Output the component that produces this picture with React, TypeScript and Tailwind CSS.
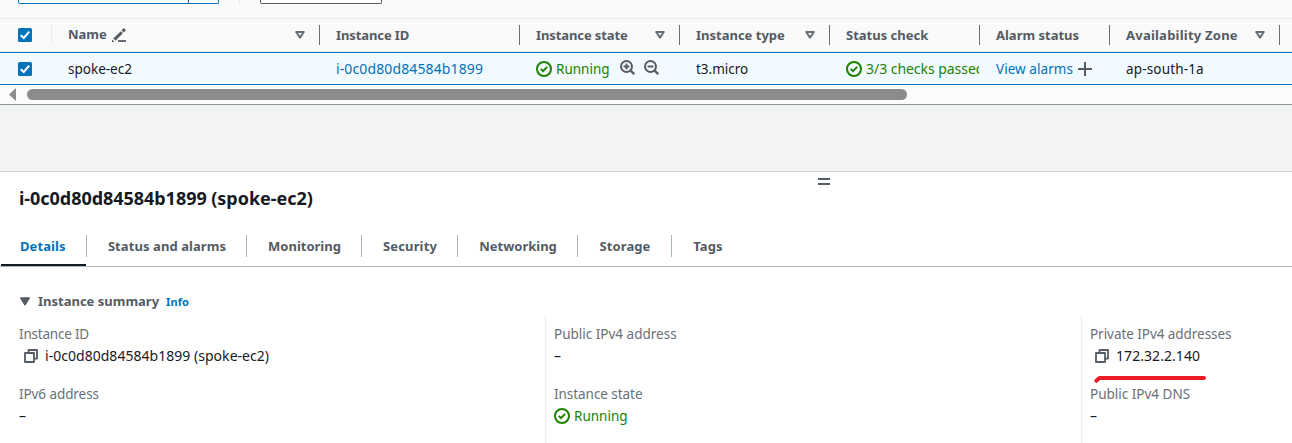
import type { ReactNode } from "react";

function Checkbox() {
  return (
    <svg className="block h-[14px] w-[14px]" viewBox="0 0 14 14">
      <rect width="14" height="14" rx="1.5" fill="#0073bb" />
      <path d="M2.7 7.2 5.8 10 11.2 3.6" fill="none" stroke="#fff" strokeWidth="2" />
    </svg>
  );
}

function SortIcon() {
  return (
    <svg className="block h-[10px] w-[10px] shrink-0" viewBox="0 0 10 10">
      <path d="M1.2 2h7.6L5 7.6Z" fill="none" stroke="#687078" strokeWidth="2" strokeLinejoin="round" />
    </svg>
  );
}

function EditIcon() {
  return (
    <svg className="block h-[14px] w-[14px] shrink-0" viewBox="0 0 14 14" fill="none" stroke="#545b64">
      <path d="M2.4 11.6 9.8 4.2" strokeWidth="2.9" />
      <path d="M10.6 3.4 12.9 1.1" strokeWidth="2.9" />
      <path d="M0 14v-2.6L2.6 14Z" fill="#545b64" stroke="none" />
      <path d="M6 13h8" strokeWidth="1.8" />
    </svg>
  );
}

function CheckCircle() {
  return (
    <svg className="block h-4 w-4 shrink-0" viewBox="0 0 16 16" fill="none" stroke="#1d8102">
      <circle cx="8" cy="8" r="7" strokeWidth="2" />
      <path d="m4.7 7.9 2.3 2.2 4.2-4.2" strokeWidth="2" />
    </svg>
  );
}

function ZoomIcon({ plus }: { plus?: boolean }) {
  return (
    <svg className="block h-[15px] w-[15px] shrink-0" viewBox="0 0 15 15" fill="none" stroke="#545b64">
      <circle cx="6.5" cy="6.5" r="5.5" strokeWidth="2" />
      <path d="M10.2 10.2l4 4" strokeWidth="2.3" />
      <path d="M3.6 6.5h5.8" strokeWidth="2" />
      {plus && <path d="M6.5 3.6v5.8" strokeWidth="2" />}
    </svg>
  );
}

function PlusIcon() {
  return (
    <svg className="block h-[14px] w-[14px] shrink-0" viewBox="0 0 14 14">
      <path d="M7 0v14M0 7h14" stroke="#545b64" strokeWidth="2" />
    </svg>
  );
}

function CopyIcon() {
  return (
    <svg className="block h-[14px] w-[14px] shrink-0" viewBox="0 0 14 14" fill="none" stroke="#545b64" strokeWidth="1.8" strokeLinejoin="round">
      <path d="M1 4h9v9H1Z" />
      <path d="M4.6 4V1H13v8.6h-3" />
    </svg>
  );
}

function HeaderCell({ width, sort, children }: { width: string; sort?: boolean; children?: ReactNode }) {
  return (
    <div className={`flex h-full shrink-0 items-center ${width}`}>
      <div className="flex h-full min-w-0 flex-1 items-center justify-between pr-[14px] pl-4">
        <div className="flex items-center whitespace-nowrap">{children}</div>
        {sort && <SortIcon />}
      </div>
      <div className="h-5 w-px bg-[#687078]" />
    </div>
  );
}

function Tab({ label, className }: { label: string; className: string }) {
  return (
    <div className={`flex h-full shrink-0 items-center justify-center border-l border-[#aab7b8] pl-px whitespace-nowrap ${className}`}>
      {label}
    </div>
  );
}

function Field({ label, labelClass = "", children }: { label: string; labelClass?: string; children: ReactNode }) {
  return (
    <div className="h-[60px]">
      <div className={`h-[22px] text-[13.5px] leading-[22px] whitespace-nowrap text-[#687078] ${labelClass}`}>{label}</div>
      <div className="flex h-[22px] items-center text-[14px] leading-[22px] whitespace-nowrap text-[#16191f]">{children}</div>
    </div>
  );
}

export default function App() {
  return (
    <div className="flex h-[443px] w-[1292px] flex-col overflow-hidden bg-white font-['Noto_Sans',sans-serif] text-[#16191f]">
      <div className="flex h-[18px] shrink-0 items-start bg-[#fafafa] pl-[18px]">
        <div className="flex h-1 w-[201px] rounded-b-[2px] border-x border-b border-[#0073bb] bg-white">
          <div className="w-[170px] border-r border-[#0073bb]" />
        </div>
        <div className="ml-5 h-1 w-px bg-[#eaeded]" />
        <div className="ml-5 h-1 w-[122px] rounded-b-[2px] border-x border-b border-[#545b64] bg-white" />
      </div>

      <div className="flex h-[34px] shrink-0 items-center border-y border-[#eaeded] bg-[#fafafa] text-[13px] font-bold text-[#545b64]">
        <div className="flex w-[52px] shrink-0 items-center justify-between pl-[18px]">
          <Checkbox />
          <div className="h-5 w-px bg-[#eaeded]" />
        </div>
        <HeaderCell width="w-[268px]" sort>
          <span className="mr-[5px]">Name</span>
          <EditIcon />
        </HeaderCell>
        <HeaderCell width="w-[200px]"><span className="pt-0.5 tracking-[-0.1px]">Instance ID</span></HeaderCell>
        <HeaderCell width="w-[160px]" sort><span className="pt-0.5 tracking-[-0.1px]">Instance state</span></HeaderCell>
        <HeaderCell width="w-[150px]" sort><span className="pt-0.5">Instance type</span></HeaderCell>
        <HeaderCell width="w-[150px]"><span className="pt-0.5">Status check</span></HeaderCell>
        <HeaderCell width="w-[130px]"><span className="pt-0.5">Alarm status</span></HeaderCell>
        <HeaderCell width="w-[170px]" sort><span className="pt-0.5 tracking-[0.23px]">Availability Zone</span></HeaderCell>
      </div>

      <div className="flex h-[33px] shrink-0 items-center border-y border-[#0073bb] bg-[#f1faff] text-[13.5px] whitespace-nowrap">
        <div className="w-[52px] shrink-0 pl-[18px]"><Checkbox /></div>
        <div className="w-[268px] shrink-0 pt-0.5 pl-4">spoke-ec2</div>
        <div className="w-[200px] shrink-0 pl-4 text-[14px] tracking-[0.12px] text-[#0073bb]">i-0c0d80d84584b1899</div>
        <div className="flex w-[160px] shrink-0 items-center pl-4">
          <CheckCircle />
          <span className="ml-1 w-[64px] pt-0.5 text-[#1d8102]">Running</span>
          <div className="-mt-[2px] flex gap-[9px]"><ZoomIcon plus /><ZoomIcon /></div>
        </div>
        <div className="w-[150px] shrink-0 pt-0.5 pl-4">t3.micro</div>
        <div className="flex w-[149px] shrink-0 items-center overflow-hidden pl-4">
          <CheckCircle />
          <span className="ml-1 text-[14px] tracking-[-0.04px] text-[#1d8102]">3/3 checks passed</span>
        </div>
        <div className="flex w-[131px] shrink-0 items-center pl-[17px]">
          <span className="w-[82px] pt-0.5 tracking-[0.06px] text-[#0073bb]">View alarms</span>
          <PlusIcon />
        </div>
        <div className="w-[170px] shrink-0 pt-0.5 pl-4 tracking-[0.16px]">ap-south-1a</div>
      </div>

      <div className="flex h-[20px] shrink-0 items-center border-b border-[#879596] bg-[#fcfcfc] pl-[9px]">
        <svg className="block h-[13px] w-[7px]" viewBox="0 0 7 13"><path d="M7 0v13L0 6.5Z" fill="#8b8b8b" /></svg>
        <div className="ml-[11px] h-[11px] w-[880px] rounded-full bg-[#8b8b8b]" />
      </div>
      <div className="h-[67px] shrink-0 border-b border-[#ccd1d1] bg-[#f2f3f3]" />

      <div className="flex h-[12px] shrink-0 justify-center pt-[6px] pl-[356px]">
        <div className="h-[7px] w-3 border-y-2 border-[#545b64]" />
      </div>
      <h1 className="h-[30px] shrink-0 pl-[19px] text-[18px] leading-[28px] font-bold tracking-[-0.04px] whitespace-nowrap">
        i-0c0d80d84584b1899 (spoke-ec2)
      </h1>

      <div className="flex h-[53px] shrink-0 items-end border-b border-[#aab7b8] text-[13px] font-bold text-[#545b64]">
        <div className="ml-px flex h-[32px] w-[85px] shrink-0 flex-col border-b-2 border-[#16191f] pl-[19px] text-[#0073bb]">
          <span className="-mt-px leading-[26px] tracking-[0.08px]">Details</span>
        </div>
        <div className="mb-[9px] flex h-[22px] leading-[22px]">
          <Tab label="Status and alarms" className="w-[160px] tracking-[0.08px]" />
          <Tab label="Monitoring" className="w-[115px]" />
          <Tab label="Security" className="w-[96px] tracking-[0.15px]" />
          <Tab label="Networking" className="w-[120px]" />
          <Tab label="Storage" className="w-[94px] tracking-[0.08px]" />
          <Tab label="Tags" className="w-[72px] tracking-[0.15px]" />
        </div>
      </div>

      <div className="flex h-[48px] shrink-0 items-end pl-5 text-[#545b64]">
        <svg className="mb-[9px] block h-[9px] w-[10px]" viewBox="0 0 10 9"><path d="M.7 1h8.6L5 8Z" fill="#545b64" stroke="#545b64" strokeWidth="1.4" strokeLinejoin="round" /></svg>
        <span className="ml-2 text-[13px] leading-[28px] font-bold whitespace-nowrap">Instance summary</span>
        <span className="ml-[7px] text-[11px] leading-[27px] font-bold tracking-[0.1px] text-[#0073bb]">Info</span>
      </div>

      <div className="flex h-[128px] shrink-0">
        <div className="w-[546px] shrink-0 border-r border-[#eaeded] pt-[8px] pl-[19px]">
          <Field label="Instance ID" labelClass="tracking-[-0.2px]">
            <span className="mr-[7px] ml-[5px]"><CopyIcon /></span>
            <span className="tracking-[0.03px]">i-0c0d80d84584b1899 (spoke-ec2)</span>
          </Field>
          <Field label="IPv6 address" labelClass="tracking-[-0.08px]">–</Field>
        </div>
        <div className="w-[536px] shrink-0 border-r border-[#eaeded] pt-[8px] pl-[8px]">
          <Field label="Public IPv4 address">–</Field>
          <Field label="Instance state" labelClass="tracking-[-0.05px]">
            <CheckCircle />
            <span className="ml-1 text-[13.5px] text-[#1d8102]">Running</span>
          </Field>
        </div>
        <div className="relative flex-1 pt-[8px] pl-[8px]">
          <Field label="Private IPv4 addresses" labelClass="tracking-[-0.05px]">
            <span className="mr-[7px] ml-[5px]"><CopyIcon /></span>
            <span className="tracking-[0.06px]">172.32.2.140</span>
          </Field>
          <Field label="Public IPv4 DNS">–</Field>
          <svg className="absolute top-[59px] left-[11px] h-[10px] w-[116px]" viewBox="0 0 116 10">
            <path d="M3.3 6.8 6.5 4H111" fill="none" stroke="#ed1c24" strokeWidth="4" strokeLinecap="round" strokeLinejoin="round" />
          </svg>
        </div>
      </div>
    </div>
  );
}
